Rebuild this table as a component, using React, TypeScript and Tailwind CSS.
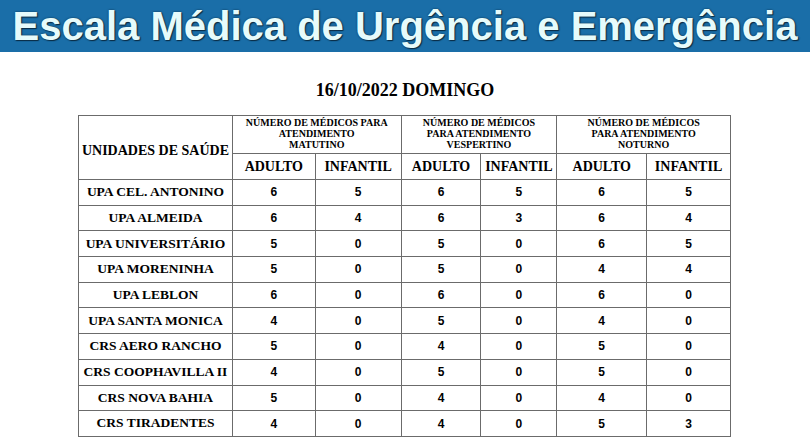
import * as React from "react";

type Row = { unidade: string; valores: number[] };

const rows: Row[] = [
  { unidade: "UPA CEL. ANTONINO", valores: [6, 5, 6, 5, 6, 5] },
  { unidade: "UPA ALMEIDA", valores: [6, 4, 6, 3, 6, 4] },
  { unidade: "UPA UNIVERSITÁRIO", valores: [5, 0, 5, 0, 6, 5] },
  { unidade: "UPA MORENINHA", valores: [5, 0, 5, 0, 4, 4] },
  { unidade: "UPA LEBLON", valores: [6, 0, 6, 0, 6, 0] },
  { unidade: "UPA SANTA MONICA", valores: [4, 0, 5, 0, 4, 0] },
  { unidade: "CRS AERO RANCHO", valores: [5, 0, 4, 0, 5, 0] },
  { unidade: "CRS COOPHAVILLA II", valores: [4, 0, 5, 0, 5, 0] },
  { unidade: "CRS NOVA BAHIA", valores: [5, 0, 4, 0, 4, 0] },
  { unidade: "CRS TIRADENTES", valores: [4, 0, 4, 0, 5, 3] },
];

const turnos = [
  ["NÚMERO DE MÉDICOS PARA", "ATENDIMENTO", "MATUTINO"],
  ["NÚMERO DE MÉDICOS", "PARA ATENDIMENTO", "VESPERTINO"],
  ["NÚMERO DE MÉDICOS", "PARA ATENDIMENTO", "NOTURNO"],
];

const serif = "font-['Liberation_Serif',serif]";
const cell = "border border-[#6b6b6b]";

export default function App() {
  return (
    <div className="w-[810px] h-[445px] bg-white overflow-hidden">
      <div className="h-[52px] bg-[#1a6ea8] flex items-center justify-center overflow-hidden">
        <h1
          className="font-['Liberation_Sans',sans-serif] font-bold text-[40px] leading-none text-[#e6fbfb] whitespace-nowrap"
          style={{ textShadow: "0 0 2px #0b2c44, 1px 1px 1px #0b2c44" }}
        >
          Escala Médica de Urgência e Emergência
        </h1>
      </div>

      <h2 className={`${serif} font-bold text-[18px] text-black text-center mt-[29px] leading-none`}>
        16/10/2022 DOMINGO
      </h2>

      <table className={`${serif} font-bold text-black border-collapse ml-[78px] mt-[16px] w-[653px]`}>
        <colgroup>
          <col className="w-[154px]" />
          <col className="w-[83px]" />
          <col className="w-[86px]" />
          <col className="w-[80px]" />
          <col className="w-[76px]" />
          <col className="w-[90px]" />
          <col className="w-[84px]" />
        </colgroup>
        <thead>
          <tr className="h-[38px]">
            <th rowSpan={2} className={`${cell} text-[14px] text-center align-middle pt-[6px]`}>
              UNIDADES DE SAÚDE
            </th>
            {turnos.map((t, i) => (
              <th key={i} colSpan={2} className={`${cell} text-[10px] leading-[11px] align-top pt-[1px]`}>
                {t.map((l) => (
                  <div key={l}>{l}</div>
                ))}
              </th>
            ))}
          </tr>
          <tr className="h-[26px]">
            {turnos.flatMap((_, i) => [
              <th key={`a${i}`} className={`${cell} text-[14px]`}>ADULTO</th>,
              <th key={`i${i}`} className={`${cell} text-[14px]`}>INFANTIL</th>,
            ])}
          </tr>
        </thead>
        <tbody>
          {rows.map((r) => (
            <tr key={r.unidade} className="h-[25.7px]">
              <td className={`${cell} text-[13.5px] text-center whitespace-nowrap`}>{r.unidade}</td>
              {r.valores.map((v, j) => (
                <td key={j} className={`${cell} font-['Liberation_Sans',sans-serif] text-[12px] text-center`}>
                  {v}
                </td>
              ))}
            </tr>
          ))}
        </tbody>
      </table>
    </div>
  );
}
